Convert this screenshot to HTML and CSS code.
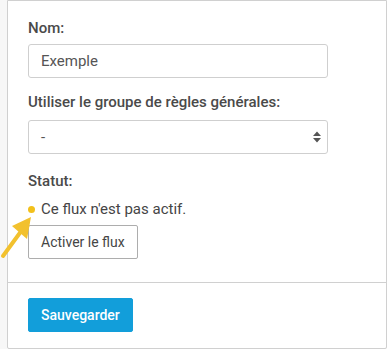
FILE: index.html
```html
<!DOCTYPE html>
<html lang="fr">
<head>
<meta charset="utf-8">
<title>Flux</title>
<link rel="stylesheet" href="styles.css">
</head>
<body>
<div class="card">
  <div class="card-body">
    <div class="group">
      <label class="label">Nom:</label>
      <div class="input">Exemple</div>
    </div>
    <div class="group">
      <label class="label">Utiliser le groupe de règles générales:</label>
      <div class="input select">
        <span>-</span>
        <svg class="caret" width="8" height="12" viewBox="0 0 8 12"><path d="M0 5 L4 0.5 L8 5 Z M0 7 L4 11.5 L8 7 Z" fill="#555"/></svg>
      </div>
    </div>
    <div class="group status-group">
      <label class="label">Statut:</label>
      <div class="status"><span class="dot"></span>Ce flux n'est pas actif.</div>
      <button class="btn">Activer le flux</button>
    </div>
  </div>
  <div class="card-footer">
    <button class="btn btn-primary">Sauvegarder</button>
  </div>
</div>
<svg class="arrow" width="40" height="60" viewBox="0 200 40 60">
  <line x1="3" y1="256" x2="22" y2="230" stroke="#f2c12e" stroke-width="4" stroke-linecap="round"/>
  <polygon points="31,217 12,226 27,239" fill="#f2c12e"/>
</svg>
</body>
</html>
```
FILE: styles.css
```css
html, body {
  margin: 0;
  padding: 0;
}
body {
  background: #f7f7f7;
  font-family: Roboto, "Liberation Sans", sans-serif;
  font-size: 15px;
  color: #454545;
  height: 349px;
  overflow: hidden;
  position: relative;
}
.card {
  margin-left: 7px;
  width: 378px;
  height: 347px;
  background: #fff;
  border: 1px solid #d0d0d0;
  border-radius: 0 0 2px 2px;
  box-sizing: content-box;
}
.card-body {
  padding: 17px 20px 23px 20px;
}
.group {
  display: flex;
  flex-direction: column;
  align-items: flex-start;
  margin-bottom: 14px;
}
.label {
  display: block;
  font-weight: 500;
  line-height: 20px;
  margin-bottom: 6px;
  color: #4a4a4a;
}
.input {
  box-sizing: border-box;
  width: 300px;
  height: 34px;
  border: 1px solid #cfcfcf;
  border-radius: 3px;
  padding: 0 12px;
  display: flex;
  align-items: center;
  color: #555;
  line-height: 20px;
}
.select {
  justify-content: space-between;
  padding-right: 6px;
  margin-top: 2px;
}
.caret {
  display: block;
}
.status-group {
  margin-bottom: 0;
}
.status-group .label {
  margin-top: 3px;
  margin-bottom: 8px;
}
.status {
  display: flex;
  align-items: center;
  line-height: 20px;
  color: #454545;
}
.dot {
  width: 7px;
  height: 7px;
  border-radius: 50%;
  background: #f2c01b;
  margin-left: 0px;
  margin-right: 6px;
}
.btn {
  font-family: Roboto, "Liberation Sans", sans-serif;
  font-size: 14px;
  height: 34px;
  padding: 0 12px;
  border: 1px solid #adadad;
  border-radius: 2px;
  background: #fff;
  color: #454545;
  margin-top: 6px;
  cursor: pointer;
}
.card-footer {
  border-top: 1px solid #d0d0d0;
  padding: 15px 20px;
}
.btn-primary {
  margin-top: 0;
  background: #129eda;
  border-color: #129eda;
  color: #fff;
  font-weight: 500;
  padding: 0 12px;
}
.arrow {
  position: absolute;
  left: 0;
  top: 200px;
}
```
